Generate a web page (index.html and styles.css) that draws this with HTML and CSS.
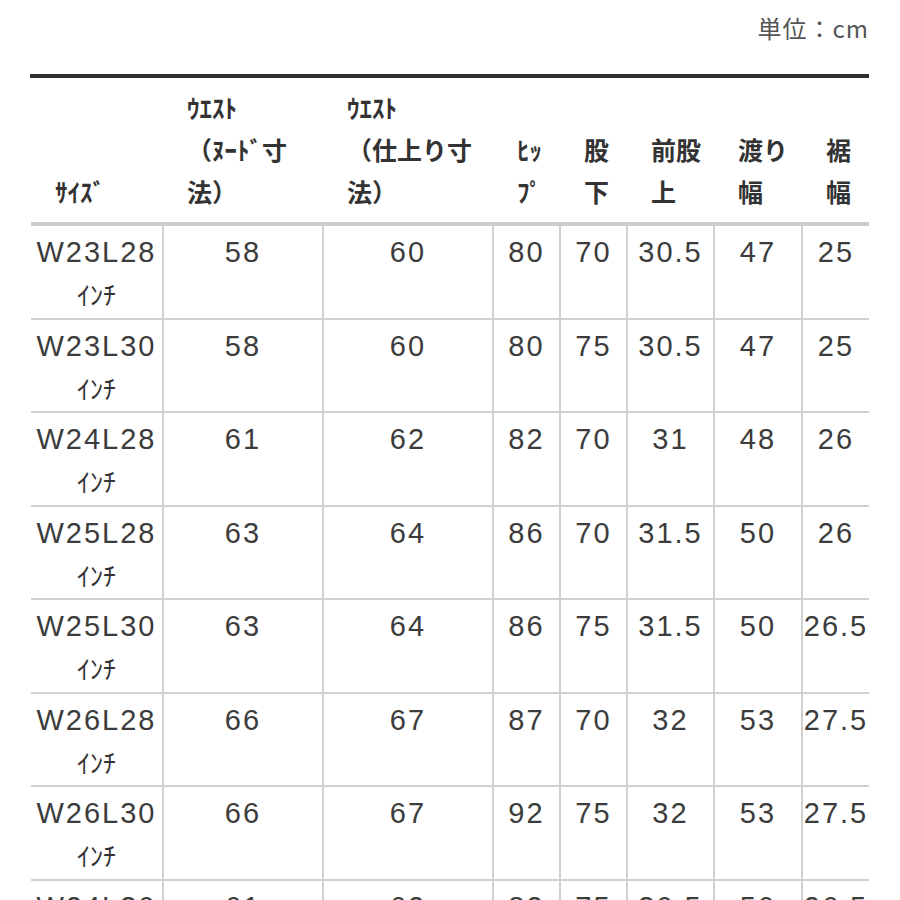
FILE: index.html
```html
<!DOCTYPE html>
<html lang="ja">
<head>
<meta charset="utf-8">
<title>サイズ表</title>
<link rel="stylesheet" href="styles.css">
</head>
<body>
<div class="page">
  <div class="unit">単位：cm</div>
  <div class="rule"></div>
  <table class="sizes">
    <colgroup>
      <col class="c-size"><col class="c-nude"><col class="c-fin"><col class="c-hip"><col class="c-inseam"><col class="c-rise"><col class="c-thigh"><col class="c-hem">
    </colgroup>
    <thead>
      <tr>
        <th>ｻｲｽﾞ</th>
        <th>ｳｴｽﾄ<br>（ﾇｰﾄﾞ寸<br>法）</th>
        <th>ｳｴｽﾄ<br>（仕上り寸<br>法）</th>
        <th>ﾋｯ<br>ﾌﾟ</th>
        <th>股<br>下</th>
        <th>前股<br>上</th>
        <th>渡り<br>幅</th>
        <th>裾<br>幅</th>
      </tr>
    </thead>
    <tbody>
      <tr><td>W23L28<span class="inch">ｲﾝﾁ</span></td><td>58</td><td>60</td><td>80</td><td>70</td><td>30.5</td><td>47</td><td>25</td></tr>
      <tr><td>W23L30<span class="inch">ｲﾝﾁ</span></td><td>58</td><td>60</td><td>80</td><td>75</td><td>30.5</td><td>47</td><td>25</td></tr>
      <tr><td>W24L28<span class="inch">ｲﾝﾁ</span></td><td>61</td><td>62</td><td>82</td><td>70</td><td>31</td><td>48</td><td>26</td></tr>
      <tr><td>W25L28<span class="inch">ｲﾝﾁ</span></td><td>63</td><td>64</td><td>86</td><td>70</td><td>31.5</td><td>50</td><td>26</td></tr>
      <tr><td>W25L30<span class="inch">ｲﾝﾁ</span></td><td>63</td><td>64</td><td>86</td><td>75</td><td>31.5</td><td>50</td><td>26.5</td></tr>
      <tr><td>W26L28<span class="inch">ｲﾝﾁ</span></td><td>66</td><td>67</td><td>87</td><td>70</td><td>32</td><td>53</td><td>27.5</td></tr>
      <tr><td>W26L30<span class="inch">ｲﾝﾁ</span></td><td>66</td><td>67</td><td>92</td><td>75</td><td>32</td><td>53</td><td>27.5</td></tr>
      <tr><td>W24L30<span class="inch">ｲﾝﾁ</span></td><td>61</td><td>62</td><td>82</td><td>75</td><td>30.5</td><td>50</td><td>26.5</td></tr>
    </tbody>
  </table>
</div>
</body>
</html>
```
FILE: styles.css
```css
html, body {
  margin: 0;
  padding: 0;
  background: #ffffff;
  overflow: hidden;
}

.page {
  width: 838px;
  margin-left: 31px;
  font-family: "Liberation Sans", "Noto Sans CJK JP", sans-serif;
  color: #3c3c3c;
}

.unit {
  text-align: right;
  font-family: "Noto Sans CJK JP", sans-serif;
  font-size: 24px;
  line-height: 30px;
  padding-top: 13px;
  color: #555555;
  letter-spacing: 1px;
}

.rule {
  margin-top: 31px;
  height: 4px;
  background: #2f2f2f;
  margin-left: -1px;
}

.sizes {
  width: 838px;
  table-layout: fixed;
  border-collapse: collapse;
}

.c-size { width: 132px; }
.c-nude { width: 160px; }
.c-fin { width: 170px; }
.c-hip { width: 67px; }
.c-inseam { width: 67px; }
.c-rise { width: 87px; }
.c-thigh { width: 88px; }
.c-hem { width: 67px; }

.sizes th {
  font-family: "Noto Sans CJK JP", sans-serif;
  font-weight: 700;
  font-size: 25px;
  line-height: 42px;
  color: #333333;
  text-align: left;
  vertical-align: bottom;
  padding: 8px 0 10px 24px;
  white-space: nowrap;
  border-bottom: 4px solid #cdcdcd;
}

.sizes td {
  font-size: 29px;
  line-height: 36px;
  letter-spacing: 2px;
  text-align: center;
  vertical-align: top;
  padding: 8px 0 0 0;
  height: 83.5px;
  border-bottom: 2px solid #d0d0d0;
  border-left: 2px solid #d0d0d0;
  white-space: nowrap;
}

.sizes td:first-child {
  border-left: none;
}

.inch {
  display: block;
  font-family: "Noto Sans CJK JP", sans-serif;
  font-size: 26px;
  line-height: 30px;
  margin-top: 9px;
  letter-spacing: 0;
  color: #333333;
}
```
